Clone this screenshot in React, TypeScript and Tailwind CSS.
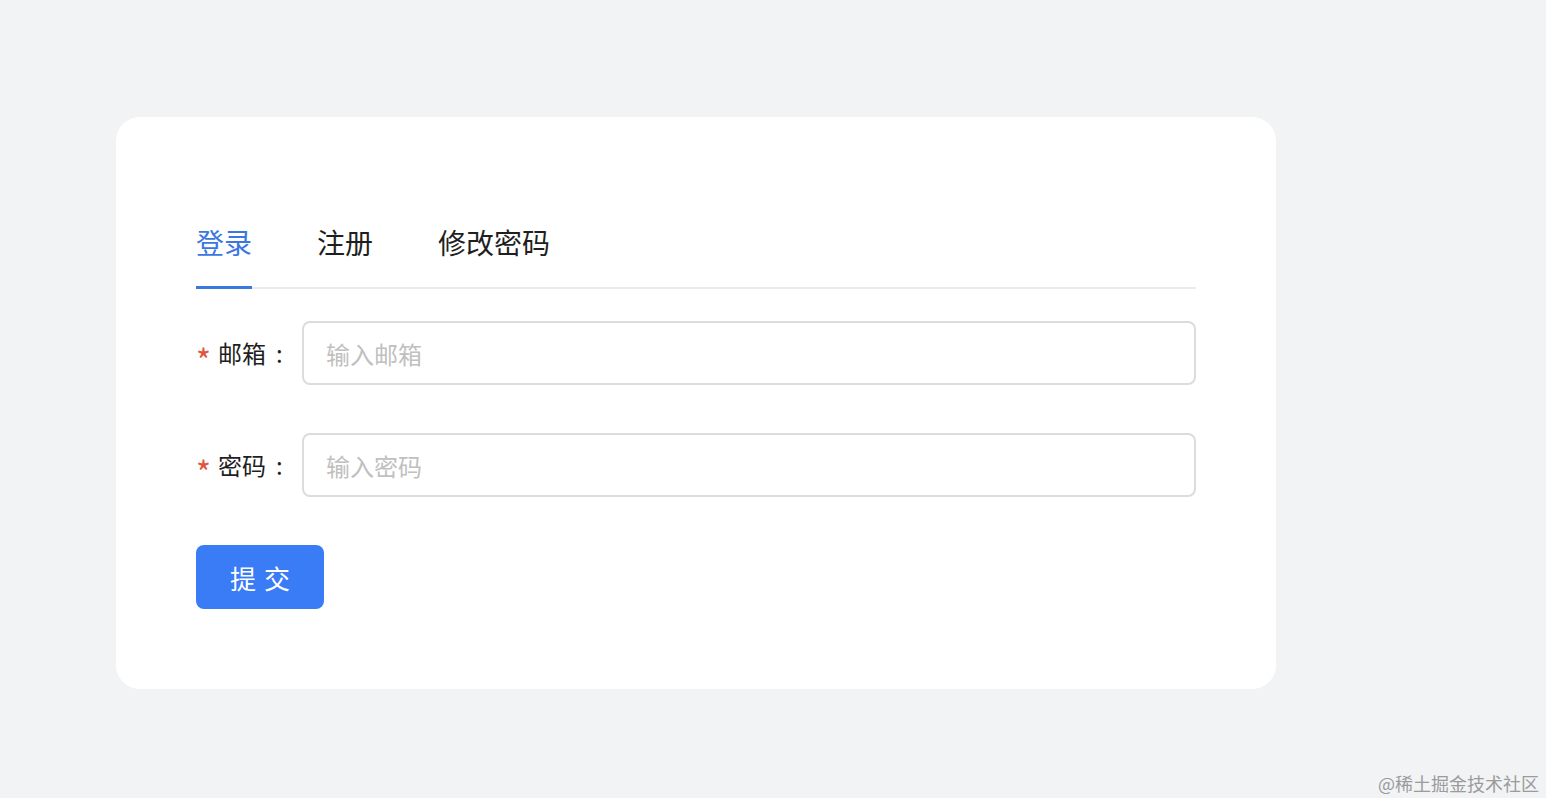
import React, { useState } from 'react';

const tabs = ['登录', '注册', '修改密码'];

const Field = ({ label, placeholder, type = 'text' }: { label: string; placeholder: string; type?: string }) => (
  <div className="flex items-center h-16">
    <label className="flex items-center shrink-0 w-[106px] text-[24px] text-[#1f1f1f]">
      <span className="text-[#e0553f] mr-[7px] text-[32px] leading-none mt-[12px]">*</span>
      {label}
      <span className="ml-[10px]">:</span>
    </label>
    <input
      type={type}
      placeholder={placeholder}
      className="flex-1 h-16 px-[22px] rounded-lg border-2 border-[#dcdcdc] text-[24px] text-[#1f1f1f] placeholder:text-[#c0c0c0] outline-none"
    />
  </div>
);

export default function App() {
  const [active, setActive] = useState(0);

  return (
    <div
      className="min-h-[798px] w-full bg-[#f2f3f5] relative"
      style={{ fontFamily: '"Noto Sans CJK SC", "Noto Sans", sans-serif' }}
    >
      <div className="pt-[117px] pl-[116px]">
        <div className="w-[1160px] bg-white rounded-[24px] pt-[105px] pb-[80px] px-[80px]">
          {/* Tabs */}
          <div className="flex gap-[65px] border-b-2 border-[#ebebeb]">
            {tabs.map((t, i) => (
              <button
                key={t}
                onClick={() => setActive(i)}
                className={`relative pb-[25px] text-[28px] leading-[40px] ${
                  i === active ? 'text-[#3a78df]' : 'text-[#1f1f1f]'
                }`}
              >
                {t}
                {i === active && (
                  <span className="absolute left-0 right-0 -bottom-[2px] h-[3px] bg-[#3a78df]" />
                )}
              </button>
            ))}
          </div>

          <div className="mt-8 flex flex-col gap-12">
            <Field label="邮箱" placeholder="输入邮箱" />
            <Field label="密码" placeholder="输入密码" type="password" />
            <div>
              <button className="w-[128px] h-16 rounded-lg bg-[#3a7bf6] text-white text-[26px] tracking-[8px] pl-[8px]">
                提交
              </button>
            </div>
          </div>
        </div>
      </div>

      <div className="absolute right-[7px] bottom-[6px] text-[18px] text-[#9b9b9b] leading-none">
        @稀土掘金技术社区
      </div>
    </div>
  );
}
